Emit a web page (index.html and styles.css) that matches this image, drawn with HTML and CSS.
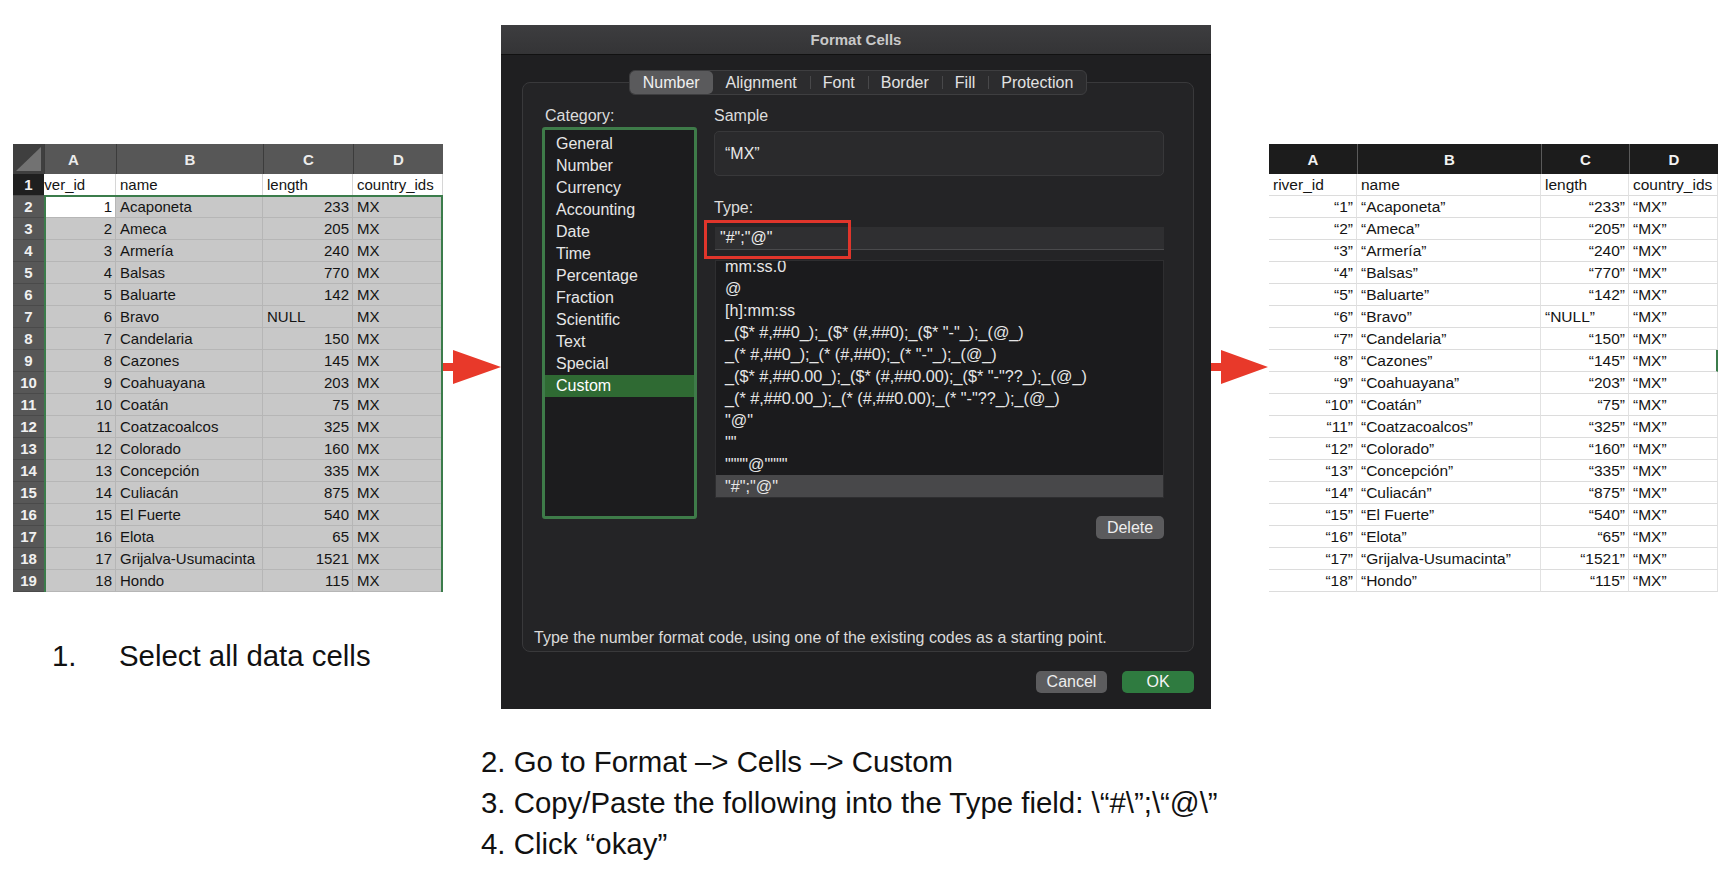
FILE: index.html
```html
<!DOCTYPE html>
<html lang="en">
<head>
<meta charset="utf-8">
<title>Format cells as quoted text</title>
<link rel="stylesheet" href="styles.css">
</head>
<body>
<div class="canvas">
  <section class="col-left">
    <div class="sheet-left">
      <div class="corner"><svg width="31" height="30" viewBox="0 0 31 30"><polygon points="3,27 28,3 28,27" fill="#727272"/></svg></div>
      <div class="hd hd-a">A</div><div class="hd">B</div><div class="hd">C</div><div class="hd">D</div>

      <div class="rn dark">1</div><div class="c w clip">river_id</div><div class="c w">name</div><div class="c w">length</div><div class="c w">country_ids</div>
      <div class="rn">2</div><div class="c s r active">1</div><div class="c s">Acaponeta</div><div class="c s r">233</div><div class="c s">MX</div>
      <div class="rn">3</div><div class="c s r">2</div><div class="c s">Ameca</div><div class="c s r">205</div><div class="c s">MX</div>
      <div class="rn">4</div><div class="c s r">3</div><div class="c s">Armería</div><div class="c s r">240</div><div class="c s">MX</div>
      <div class="rn">5</div><div class="c s r">4</div><div class="c s">Balsas</div><div class="c s r">770</div><div class="c s">MX</div>
      <div class="rn">6</div><div class="c s r">5</div><div class="c s">Baluarte</div><div class="c s r">142</div><div class="c s">MX</div>
      <div class="rn">7</div><div class="c s r">6</div><div class="c s">Bravo</div><div class="c s">NULL</div><div class="c s">MX</div>
      <div class="rn">8</div><div class="c s r">7</div><div class="c s">Candelaria</div><div class="c s r">150</div><div class="c s">MX</div>
      <div class="rn">9</div><div class="c s r">8</div><div class="c s">Cazones</div><div class="c s r">145</div><div class="c s">MX</div>
      <div class="rn">10</div><div class="c s r">9</div><div class="c s">Coahuayana</div><div class="c s r">203</div><div class="c s">MX</div>
      <div class="rn">11</div><div class="c s r">10</div><div class="c s">Coatán</div><div class="c s r">75</div><div class="c s">MX</div>
      <div class="rn">12</div><div class="c s r">11</div><div class="c s">Coatzacoalcos</div><div class="c s r">325</div><div class="c s">MX</div>
      <div class="rn">13</div><div class="c s r">12</div><div class="c s">Colorado</div><div class="c s r">160</div><div class="c s">MX</div>
      <div class="rn">14</div><div class="c s r">13</div><div class="c s">Concepción</div><div class="c s r">335</div><div class="c s">MX</div>
      <div class="rn">15</div><div class="c s r">14</div><div class="c s">Culiacán</div><div class="c s r">875</div><div class="c s">MX</div>
      <div class="rn">16</div><div class="c s r">15</div><div class="c s">El Fuerte</div><div class="c s r">540</div><div class="c s">MX</div>
      <div class="rn">17</div><div class="c s r">16</div><div class="c s">Elota</div><div class="c s r">65</div><div class="c s">MX</div>
      <div class="rn">18</div><div class="c s r">17</div><div class="c s">Grijalva-Usumacinta</div><div class="c s r">1521</div><div class="c s">MX</div>
      <div class="rn">19</div><div class="c s r">18</div><div class="c s">Hondo</div><div class="c s r">115</div><div class="c s">MX</div>
      <div class="selection"></div>
    </div>
    <p class="step1"><span class="num">1.</span><span>Select all data cells</span></p>
  </section>

  <div class="arrow arrow-l">
    <svg width="58" height="35" viewBox="0 0 58 35"><polygon points="0,13 10,13 10,0 58,17 10,34 10,21 0,21" fill="#e8392a"/></svg>
  </div>

  <section class="col-mid">
    <div class="dialog">
      <div class="titlebar">Format Cells</div>
      <div class="dbody">
        <div class="tabs">
          <span class="tab on">Number</span>
          <span class="tab">Alignment</span>
          <span class="tab sep">Font</span>
          <span class="tab sep">Border</span>
          <span class="tab sep">Fill</span>
          <span class="tab sep">Protection</span>
        </div>
        <div class="panel">
          <div class="panel-top">
            <div class="catcol">
              <div class="lbl cat-lbl">Category:</div>
              <ul class="catlist">
                <li>General</li><li>Number</li><li>Currency</li><li>Accounting</li><li>Date</li><li>Time</li>
                <li>Percentage</li><li>Fraction</li><li>Scientific</li><li>Text</li><li>Special</li><li class="on">Custom</li>
              </ul>
            </div>
            <div class="maincol">
              <div class="lbl">Sample</div>
              <div class="sample">“MX”</div>
              <div class="lbl type-lbl">Type:</div>
              <div class="typefield">
                <div class="typeinput">"#";"@"</div>
                <div class="redbox"></div>
              </div>
              <div class="codes">
                <ul class="codelist">
                  <li>mm:ss.0</li>
                  <li>@</li>
                  <li>[h]:mm:ss</li>
                  <li>_($* #,##0_);_($* (#,##0);_($* "-"_);_(@_)</li>
                  <li>_(* #,##0_);_(* (#,##0);_(* "-"_);_(@_)</li>
                  <li>_($* #,##0.00_);_($* (#,##0.00);_($* "-"??_);_(@_)</li>
                  <li>_(* #,##0.00_);_(* (#,##0.00);_(* "-"??_);_(@_)</li>
                  <li>"@"</li>
                  <li>""</li>
                  <li>""""@""""</li>
                  <li class="on">"#";"@"</li>
                </ul>
              </div>
              <div class="delrow"><span class="btn del">Delete</span></div>
            </div>
          </div>
          <p class="hint">Type the number format code, using one of the existing codes as a starting point.</p>
        </div>
        <div class="actions">
          <span class="btn cancel">Cancel</span>
          <span class="btn ok">OK</span>
        </div>
      </div>
    </div>
    <div class="steps">
      <p>2. Go to Format –&gt; Cells –&gt; Custom</p>
      <p>3. Copy/Paste the following into the Type field: \“#\”;\“@\”</p>
      <p>4. Click “okay”</p>
    </div>
  </section>

  <div class="arrow arrow-r">
    <svg width="57" height="35" viewBox="0 0 57 35"><polygon points="0,13 10,13 10,0 57,17 10,34 10,21 0,21" fill="#e8392a"/></svg>
  </div>

  <section class="col-right">
    <div class="sheet-right">
      <div class="hd2">A</div><div class="hd2">B</div><div class="hd2">C</div><div class="hd2">D</div>
      <div class="d">river_id</div><div class="d">name</div><div class="d">length</div><div class="d">country_ids</div>
      <div class="d r">“1”</div><div class="d">“Acaponeta”</div><div class="d r">“233”</div><div class="d">“MX”</div>
      <div class="d r">“2”</div><div class="d">“Ameca”</div><div class="d r">“205”</div><div class="d">“MX”</div>
      <div class="d r">“3”</div><div class="d">“Armería”</div><div class="d r">“240”</div><div class="d">“MX”</div>
      <div class="d r">“4”</div><div class="d">“Balsas”</div><div class="d r">“770”</div><div class="d">“MX”</div>
      <div class="d r">“5”</div><div class="d">“Baluarte”</div><div class="d r">“142”</div><div class="d">“MX”</div>
      <div class="d r">“6”</div><div class="d">“Bravo”</div><div class="d">“NULL”</div><div class="d">“MX”</div>
      <div class="d r">“7”</div><div class="d">“Candelaria”</div><div class="d r">“150”</div><div class="d">“MX”</div>
      <div class="d r">“8”</div><div class="d">“Cazones”</div><div class="d r">“145”</div><div class="d cursor">“MX”</div>
      <div class="d r">“9”</div><div class="d">“Coahuayana”</div><div class="d r">“203”</div><div class="d">“MX”</div>
      <div class="d r">“10”</div><div class="d">“Coatán”</div><div class="d r">“75”</div><div class="d">“MX”</div>
      <div class="d r">“11”</div><div class="d">“Coatzacoalcos”</div><div class="d r">“325”</div><div class="d">“MX”</div>
      <div class="d r">“12”</div><div class="d">“Colorado”</div><div class="d r">“160”</div><div class="d">“MX”</div>
      <div class="d r">“13”</div><div class="d">“Concepción”</div><div class="d r">“335”</div><div class="d">“MX”</div>
      <div class="d r">“14”</div><div class="d">“Culiacán”</div><div class="d r">“875”</div><div class="d">“MX”</div>
      <div class="d r">“15”</div><div class="d">“El Fuerte”</div><div class="d r">“540”</div><div class="d">“MX”</div>
      <div class="d r">“16”</div><div class="d">“Elota”</div><div class="d r">“65”</div><div class="d">“MX”</div>
      <div class="d r">“17”</div><div class="d">“Grijalva-Usumacinta”</div><div class="d r">“1521”</div><div class="d">“MX”</div>
      <div class="d r">“18”</div><div class="d">“Hondo”</div><div class="d r">“115”</div><div class="d">“MX”</div>
    </div>
  </section>
</div>
</body>
</html>
```

FILE: styles.css
```css
* { box-sizing: border-box; }
html, body { margin: 0; padding: 0; background: #fff; }
body { width: 1734px; height: 880px; overflow: hidden; font-family: "Liberation Sans", Arial, sans-serif; }

.canvas { display: flex; align-items: flex-start; }

/* ---------- left sheet ---------- */
.col-left { width: 443px; padding: 144px 0 0 13px; }
.sheet-left {
  position: relative;
  display: grid;
  grid-template-columns: 31px 72px 147px 90px 90px;
  grid-template-rows: 30px repeat(19, 22px);
  font-size: 15px;
  color: #141414;
  overflow: hidden;
}
.corner { background: #3f3f3f; }
.corner svg { display: block; }
.hd {
  background: #575757; color: #ececec; font-weight: bold;
  display: flex; align-items: center; justify-content: center;
  border-left: 1px solid #3c3c3c; font-size: 15px;
}
.hd-a { padding-right: 14px; }
.rn {
  background: #575757; color: #f0f0f0; font-weight: bold;
  display: flex; align-items: center; justify-content: center;
  border-bottom: 1px solid #4a4a4a; font-size: 15px;
}
.rn.dark { background: #1f1f1f; }
.c {
  padding: 0 4px; line-height: 21px; white-space: nowrap; overflow: hidden;
  border-right: 1px solid #b6b6b6; border-bottom: 1px solid #b6b6b6;
}
.c.w { background: #fff; border-color: #d6d6d6; }
.c.clip { padding: 0; text-indent: -8px; }
.c.s { background: #c8c8c8; }
.c.active { background: #fff; }
.c.r { text-align: right; padding-right: 3px; }
.selection {
  position: absolute; left: 31px; top: 51px; width: 399px; height: 400px;
  border: 2px solid #3b7c4b; pointer-events: none;
}

.step1 { margin: 45px 0 0 39px; display: flex; font-size: 29.4px; line-height: 37px; color: #111; white-space: nowrap; }
.step1 .num { width: 67px; flex: none; }

/* ---------- arrows ---------- */
.arrow { padding-top: 350px; }
.arrow svg { display: block; }
.arrow-l { width: 58px; }
.arrow-r { width: 57px; }

/* ---------- dialog ---------- */
.col-mid { width: 710px; padding-top: 25px; }
.dialog {
  width: 710px; height: 684px; background: #1f1f21;
  display: flex; flex-direction: column; color: #e4e4e4; font-size: 16px;
}
.titlebar {
  height: 30px; flex: none;
  background: linear-gradient(#3d3d3f, #343436);
  border-bottom: 1px solid #111;
  color: #c9c9c9; font-weight: bold; font-size: 15px;
  display: flex; align-items: center; justify-content: center;
}
.dbody { flex: 1; display: flex; flex-direction: column; padding: 0 17px 16px 21px; }
.tabs {
  position: relative; z-index: 1; align-self: center;
  margin-top: 15px; height: 25px; display: flex; align-items: center;
  background: #2c2c2e; border: 1px solid #3e3e40; border-radius: 6px;
}
.tab { height: 23px; line-height: 23px; padding: 0 13px; color: #e2e2e2; position: relative; }
.tab.on { background: #5a5a5c; border-radius: 5px; color: #f0f0f0; }
.tab.sep::before {
  content: ""; position: absolute; left: 0; top: 5px; height: 13px; width: 1px; background: #48484a;
}
.panel {
  margin-top: -13px; height: 570px;
  background: #242426; border: 1px solid #39393b; border-radius: 8px;
  padding: 24px 29px 3px 19px;
  display: flex; flex-direction: column;
}
.panel-top { display: flex; gap: 17px; }
.lbl { height: 18px; line-height: 18px; color: #dcdcdc; }
.catcol { width: 155px; }
.cat-lbl { padding-left: 3px; margin-bottom: 2px; }
.catlist {
  list-style: none; margin: 0; padding: 3px 0 0; height: 392px;
  border: 3px solid #3e7b49; border-radius: 3px; background: #1c1c1e;
}
.catlist li { height: 22px; line-height: 22px; padding-left: 11px; color: #e6e6e6; }
.catlist li.on { background: #2f6a33; color: #fff; }

.maincol { width: 450px; }
.sample {
  margin-top: 6px; height: 45px; padding: 12px 0 0 10px;
  background: #2a2a2c; border: 1px solid #38383a; border-radius: 5px;
  line-height: 20px; color: #e8e8e8;
}
.type-lbl { margin-top: 23px; }
.typefield { position: relative; margin-top: 10px; margin-left: 1px; }
.typeinput {
  height: 23px; line-height: 22px; padding-left: 5px;
  background: #2f2f31; border-bottom: 1px solid #4a4a4c; color: #ececec;
}
.redbox {
  position: absolute; left: -11px; top: -7px; width: 147px; height: 39px;
  border: 3px solid #e0352b;
}
.codes {
  margin: 10px 0 0 1px; height: 238px; overflow: hidden;
  background: #1b1b1d; border: 1px solid #2e2e30;
}
.codelist { list-style: none; margin: -6px 0 0; padding: 0; font-size: 16.2px; }
.codelist li { height: 22px; line-height: 22px; padding-left: 9px; color: #e6e6e6; white-space: nowrap; }
.codelist li.on { background: #48484a; }
.delrow { display: flex; justify-content: flex-end; margin-top: 18px; }
.btn {
  display: inline-flex; align-items: center; justify-content: center;
  height: 23px; border-radius: 5px; color: #ededed; font-size: 16px;
}
.del { width: 68px; background: #5b5b5d; }
.hint { margin: auto 0 0 -8px; line-height: 20px; color: #dadada; font-size: 16px; white-space: nowrap; }
.actions { display: flex; justify-content: flex-end; gap: 15px; margin-top: 19px; }
.cancel { width: 71px; height: 22px; background: #5c5c5e; }
.ok { width: 72px; height: 22px; background: #2f7b40; color: #f4f4f4; }

.steps { margin: 32px 0 0 -20px; font-size: 29.4px; line-height: 41px; color: #111; white-space: nowrap; }
.steps p { margin: 0; }

/* ---------- right sheet ---------- */
.col-right { padding: 144px 0 0 1px; }
.sheet-right {
  display: grid;
  grid-template-columns: 88px 184px 88px 89px;
  grid-template-rows: 30px repeat(19, 22px);
  font-size: 15.5px; color: #141414;
}
.hd2 {
  background: #1c1c1c; color: #f2f2f2; font-weight: bold; font-size: 15px;
  display: flex; align-items: center; justify-content: center;
  border-left: 1px solid #5a5a5a;
}
.hd2:first-child { border-left: none; }
.d {
  padding: 0 4px; line-height: 21px; white-space: nowrap; overflow: hidden;
  border-bottom: 1px solid #dcdcdc; border-right: 1px solid #e2e2e2;
}
.d.r { text-align: right; padding-right: 3px; }
.d.cursor { border-right: 2px solid #3b7c4b; }
```
